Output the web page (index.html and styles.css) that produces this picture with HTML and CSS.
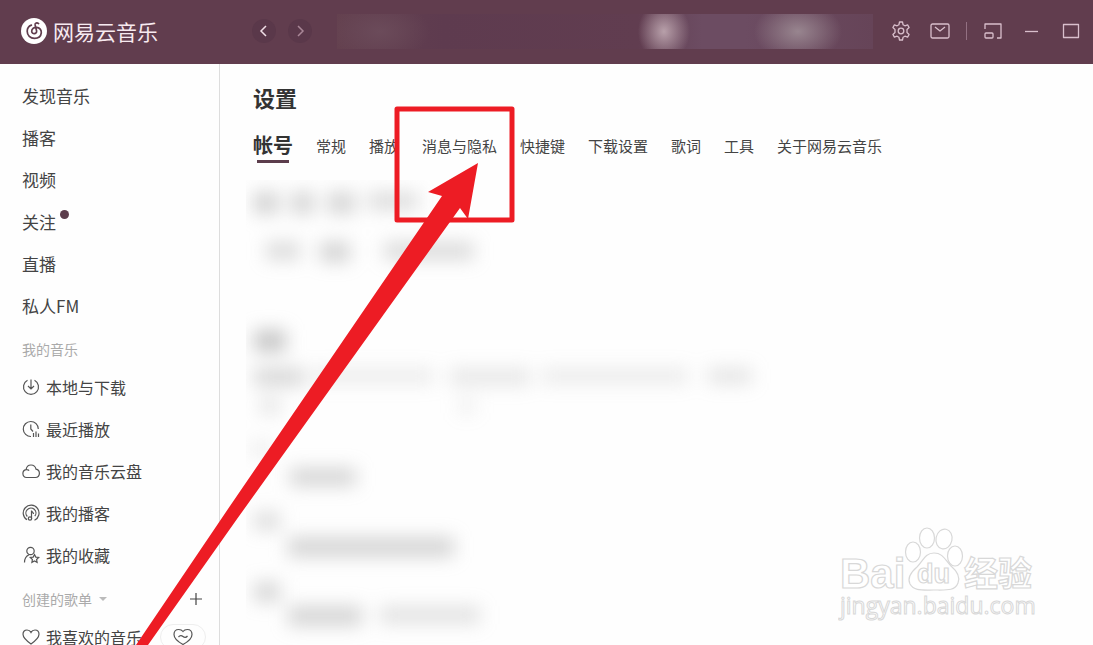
FILE: index.html
```
<!DOCTYPE html>
<html lang="zh-CN">
<head>
    <meta charset="utf-8">
    <title>网易云音乐</title>
    <link rel="stylesheet" href="styles.css">
</head>
<body>
    <header class="topbar">
        <a href="#" class="logo">
            <svg width="26" height="26" viewBox="0 0 26 26" fill="none">
                <circle cx="13" cy="13" r="13" fill="#fff"/>
                <path d="M17.6 5.6c-1.600-1.200-3.800-.6-3.500 1.300l1.500 6.100c.4 3.400-4.800 3.600-4.900.3-.1-2.700 2.500-4.100 4.900-3.900 3 .2 5 2.600 4.700 5.400-.4 3.400-3.200 5.500-6.800 5.500-4.300 0-7.300-3-7.300-7 0-2.800 1.600-5.200 4.200-6.200" stroke="#613d4e" stroke-width="1.700" stroke-linecap="round"/>
            </svg>
            <span>网易云音乐</span>
        </a>
        <nav class="history">
            <button class="round" aria-label="后退"><svg width="24" height="24" viewBox="0 0 24 24"><path d="M14 7l-5 5 5 5"/></svg></button>
            <button class="round dim" aria-label="前进"><svg width="24" height="24" viewBox="0 0 24 24"><path d="M10 7l5 5-5 5"/></svg></button>
        </nav>
        <div class="smudge"></div>
        <div class="tools">
            <button aria-label="设置"><svg width="20" height="20" viewBox="0 0 20 20"><path d="M8.500 1h3l.6 2.800 1.800 1 2.700-.9 1.500 2.600-2.100 1.900v3.200l2.100 1.900-1.500 2.600-2.700-.9-1.800 1-.6 2.800h-3l-.6-2.800-1.800-1-2.700.9-1.500-2.600L4 11.600V8.400L1.900 6.500l1.500-2.600 2.700.9 1.800-1z"/><circle cx="10" cy="10" r="2.800"/></svg></button>
            <button aria-label="消息"><svg width="20" height="20" viewBox="0 0 20 20"><rect x="1" y="3" width="18" height="14" rx="1.500"/><path d="M5 6l5 4 5-4"/></svg></button>
            <span class="line"></span>
            <button aria-label="迷你模式"><svg width="20" height="20" viewBox="0 0 20 20"><path d="M2 8V3h16v14h-4"/><rect x="2" y="12" width="8" height="5" rx="1"/></svg></button>
            <button aria-label="最小化"><svg width="20" height="20" viewBox="0 0 20 20"><path d="M3 10.500h13"/></svg></button>
            <button aria-label="最大化"><svg width="20" height="20" viewBox="0 0 20 20"><rect x="2.500" y="3.500" width="15" height="13"/></svg></button>
        </div>
    </header>

    <div class="page">
        <aside class="sidebar">
            <ul class="menu main">
                <li><a href="#">发现音乐</a></li>
                <li><a href="#">播客</a></li>
                <li><a href="#">视频</a></li>
                <li><a href="#">关注<i class="dot"></i></a></li>
                <li><a href="#">直播</a></li>
                <li><a href="#">私人FM</a></li>
            </ul>
            <div class="group">我的音乐</div>
            <ul class="menu">
                <li><a href="#"><svg width="18" height="18" viewBox="0 0 18 18"><path d="M5.500 2.300a7.500 7.500 0 1 0 7 0M9 1.500v9M6 8l3 3 3-3"/></svg>本地与下载</a></li>
                <li><a href="#"><svg width="18" height="18" viewBox="0 0 18 18"><path d="M16.300 9A7.500 7.500 0 1 0 9 16.500M8.800 4.500V9l2.200 2.500M11.500 13v4M14 11.500V17M16.500 13.500V17"/></svg>最近播放</a></li>
                <li><a href="#"><svg width="18" height="18" viewBox="0 0 18 18"><path d="M4.500 15.500a4 4 0 0 1-.4-7.900C4.500 4.800 6.600 3 9 3c2.600 0 4.500 1.700 5 4.200 2 .4 3.400 2 3.400 4.100 0 2.400-1.700 4.200-4 4.200zM4.100 7.600c1.200-.2 2.300.2 3 1"/></svg>我的音乐云盘</a></li>
                <li><a href="#"><svg width="18" height="18" viewBox="0 0 18 18"><path d="M5 15.800a7.900 7.900 0 1 1 7.500.4M5.300 12.500a5 5 0 1 1 7.500-.3M9.500 14.500v-8c.2 1.200 2 1.700 2 3.500"/><circle cx="8" cy="14.500" r="1.700"/></svg>我的播客</a></li>
                <li><a href="#"><svg width="18" height="18" viewBox="0 0 18 18"><circle cx="8.500" cy="5" r="3.700"/><path d="M2.500 16.500c0-4 1.500-6.500 4.500-7.800M12.500 8.500l1.300 2.600 2.900.4-2.100 2 .5 2.900-2.600-1.400-2.600 1.400.5-2.900-2.100-2 2.900-.4z"/></svg>我的收藏</a></li>
            </ul>
            <div class="group">创建的歌单<i class="caret"></i>
                <button class="add" aria-label="新建歌单"><svg width="14" height="14" viewBox="0 0 14 14"><path d="M7 1v12M1 7h12"/></svg></button>
            </div>
            <ul class="menu">
                <li><a href="#"><svg width="18" height="18" viewBox="0 0 18 18"><path d="M9 16C4 12.500 1 9.800 1 6.300 1 3.700 2.800 2 5 2c1.700 0 3.200.9 4 2.400C9.800 2.900 11.300 2 13 2c2.200 0 4 1.700 4 4.300 0 3.500-3 6.200-8 9.700z"/></svg>我喜欢的音乐</a>
                    <button class="heart" aria-label="心动模式"><svg width="20" height="18" viewBox="0 0 20 18"><path d="M10 16.500C4.500 13.500 1 10.500 1 6.500 1 3.500 3 1.500 5.700 1.500c1.800 0 3.400.8 4.300 2 .9-1.200 2.500-2 4.300-2C17 1.500 19 3.500 19 6.500c0 4-3.500 7-9 10zM5.500 9c1.500-1.800 3-1.800 4.500-.5s3 1.300 4.500-.5"/></svg></button>
                </li>
            </ul>
        </aside>

        <main class="content">
            <h1>设置</h1>
            <nav class="tabs">
                <a href="#" class="active">帐号</a>
                <a href="#">常规</a>
                <a href="#">播放</a>
                <a href="#">消息与隐私</a>
                <a href="#">快捷键</a>
                <a href="#">下载设置</a>
                <a href="#">歌词</a>
                <a href="#">工具</a>
                <a href="#">关于网易云音乐</a>
            </nav>
            <!-- blurred account details -->
            <svg class="hidden-info" width="560" height="465" viewBox="0 0 560 465">
                <g fill="#999">
                    <rect x="8" y="12" width="24" height="22" opacity=".44"/>
                    <rect x="44" y="12" width="25" height="22" opacity=".38"/>
                    <rect x="82" y="12" width="27" height="22" opacity=".4"/>
                    <rect x="122" y="12" width="50" height="18" opacity=".32"/>
                    <rect x="20" y="62" width="34" height="18" opacity=".34"/>
                    <rect x="74" y="62" width="30" height="20" opacity=".42"/>
                    <rect x="138" y="62" width="90" height="18" opacity=".34"/>
                    <rect x="8" y="150" width="32" height="22" opacity=".54"/>
                    <rect x="8" y="188" width="50" height="18" opacity=".38"/>
                    <rect x="66" y="188" width="122" height="16" opacity=".18"/>
                    <rect x="204" y="188" width="80" height="18" opacity=".22"/>
                    <rect x="296" y="188" width="146" height="16" opacity=".19"/>
                    <rect x="462" y="188" width="44" height="16" opacity=".26"/>
                    <rect x="14" y="218" width="20" height="16" opacity=".26"/>
                    <rect x="212" y="218" width="18" height="16" opacity=".14"/>
                    <rect x="6" y="262" width="18" height="14" opacity=".2"/>
                    <rect x="44" y="288" width="66" height="18" opacity=".4"/>
                    <rect x="8" y="332" width="26" height="18" opacity=".32"/>
                    <rect x="42" y="357" width="166" height="20" opacity=".4"/>
                    <rect x="8" y="402" width="26" height="20" opacity=".38"/>
                    <rect x="42" y="426" width="74" height="20" opacity=".4"/>
                    <rect x="134" y="426" width="100" height="18" opacity=".28"/>
                </g>
            </svg>
        </main>
    </div>

    <svg class="watermark" width="200" height="100" viewBox="0 0 200 100">
        <text x="2" y="63" class="wm-big">Bai</text>
        <ellipse cx="75" cy="27" rx="7.500" ry="10"/>
        <ellipse cx="89" cy="13" rx="7.500" ry="10"/>
        <ellipse cx="106" cy="14" rx="8" ry="10" transform="rotate(12 106 14)"/>
        <ellipse cx="117" cy="31" rx="7.500" ry="10"/>
        <path d="M96 28c9 0 11 7 17 13 7 6 9 12 7 17-3 8-11 7-24 7s-20 1-24-6c-3-6 0-11 7-17 6-6 8-14 17-14z"/>
        <text x="79" y="58" class="wm-du">du</text>
        <text x="126" y="61" class="wm-cn">经验</text>
        <text x="2" y="89" class="wm-url">jingyan.baidu.com</text>
    </svg>

    <!-- red box and arrow over the tab -->
    <svg class="pointer" width="530" height="645" viewBox="0 0 530 645">
        <rect x="397" y="109" width="115" height="111" fill="none" stroke="#ed1c24" stroke-width="5" stroke-linejoin="round"/>
        <path d="M478 163L428 192 442 196 230 506 136 645H148L237 519 460 208 468 219z" fill="#ed1c24"/>
    </svg>
</body>
</html>
```
FILE: styles.css
```
*{
    margin: 0;
    padding: 0;
    box-sizing: border-box;
}

body{
    height: 100vh;
    display: flex;
    flex-direction: column;
    overflow: hidden;
    position: relative;
    background: #fefefe;
    color: #444;
    font-family: "Noto Sans CJK SC", sans-serif;
    font-size: 15px;
}

a{
    color: inherit;
    text-decoration: none;
}

button{
    border: 0;
    background: transparent;
    display: flex;
    align-items: center;
    justify-content: center;
    cursor: pointer;
}

ul{
    list-style: none;
}

svg{
    flex: none;
}

/* top bar */
.topbar{
    height: 64px;
    flex: none;
    display: flex;
    align-items: center;
    background: #613d4e;
    padding: 0 12px 3px 21px;
}

.logo{
    width: 231px;
    display: flex;
    align-items: center;
    gap: 6px;
    color: #f7eaf0;
    font-size: 21px;
    line-height: 24px;
}

.history{
    display: flex;
    gap: 12px;
}

.round{
    width: 24px;
    height: 24px;
    border-radius: 50%;
    background: #5a384a;
}

.round svg{
    fill: none;
    stroke: #f0dfe7;
    stroke-width: 1.5;
}

.dim svg{
    stroke: #a98797;
}

.smudge{
    flex: 1;
    height: 35px;
    margin: 2px 18px 0 25px;
    background:
        radial-gradient(ellipse 26px 30px at 61% 50%, #b8a0aa, #b8a0aa00),
        radial-gradient(ellipse 44px 30px at 86% 50%, #98858f, #98858f00),
        radial-gradient(ellipse 50px 30px at 8% 50%, #6b4b5a, #6b4b5a00),
        linear-gradient(90deg, #64414f, #5e3b4f 20%, #613d50 56%, #6c4c62 68%, #6c4c62 76%, #664458);
}

.tools{
    display: flex;
    align-items: center;
    gap: 19px;
}

.tools svg{
    display: block;
    fill: none;
    stroke: #d9bfcc;
    stroke-width: 1.3;
    stroke-linejoin: round;
}

.line{
    width: 1px;
    height: 18px;
    background: #937082;
    margin: 0 -3px;
}

/* left menu */
.page{
    flex: 1;
    min-height: 0;
    display: flex;
}

.sidebar{
    width: 220px;
    flex: none;
    padding-top: 10px;
    border-right: 1px solid #ddd;
    overflow: hidden;
}

.menu{
    font-size: 16px;
}

.menu li{
    height: 42px;
    padding: 0 13px 0 22px;
    display: flex;
    align-items: center;
    justify-content: space-between;
}

.menu a{
    display: flex;
    align-items: center;
    gap: 6px;
    white-space: nowrap;
}

.menu svg{
    fill: none;
    stroke: #555;
    stroke-width: 1.2;
}

.main{
    font-size: 17px;
}

.dot{
    width: 9px;
    height: 9px;
    border-radius: 50%;
    background: #5c3d4c;
    margin: 0 0 14px -2px;
}

.group{
    height: 40px;
    padding: 6px 16px 0 22px;
    display: flex;
    align-items: center;
    font-size: 14px;
    color: #aaa;
}

.caret{
    border: 4px solid transparent;
    border-top-color: #bbb;
    border-bottom: 0;
    margin-left: 7px;
}

.add{
    margin-left: auto;
}

.add svg{
    fill: none;
    stroke: #444;
    stroke-width: 1.2;
}

.heart{
    width: 46px;
    height: 26px;
    border: 1px solid #eee;
    border-radius: 13px;
}

/* settings */
.content{
    flex: 1;
    min-width: 0;
    padding: 17px 20px 0 33px;
    overflow: hidden;
}

h1{
    color: #333;
    font-size: 22px;
    line-height: 32px;
}

.tabs{
    height: 34px;
    margin-top: 16px;
    display: flex;
    gap: 23px;
    line-height: 34px;
    white-space: nowrap;
}

.tabs .active{
    color: #333;
    font-size: 20px;
    font-weight: bold;
    line-height: 32px;
    background: linear-gradient(#5c3d4c, #5c3d4c) center bottom / 32px 3px no-repeat;
}

.hidden-info{
    display: block;
    margin: 17px 0 0 -7px;
}

.hidden-info g{
    filter: blur(9px);
}

/* overlays */
.pointer{
    position: absolute;
    left: 0;
    top: 0;
    pointer-events: none;
}

.watermark{
    position: absolute;
    right: 55px;
    bottom: 20px;
    fill: #fff;
    stroke: #d8d8d8;
    stroke-width: 1.2;
}

.wm-big{
    font: bold 42px "Liberation Sans", sans-serif;
}

.wm-du{
    font: bold 27px "Liberation Sans", sans-serif;
}

.wm-cn{
    font: bold 34px "Noto Sans CJK SC", sans-serif;
}

.wm-url{
    font: 23px "Open Sans", sans-serif;
    stroke-width: 1;
}
```
